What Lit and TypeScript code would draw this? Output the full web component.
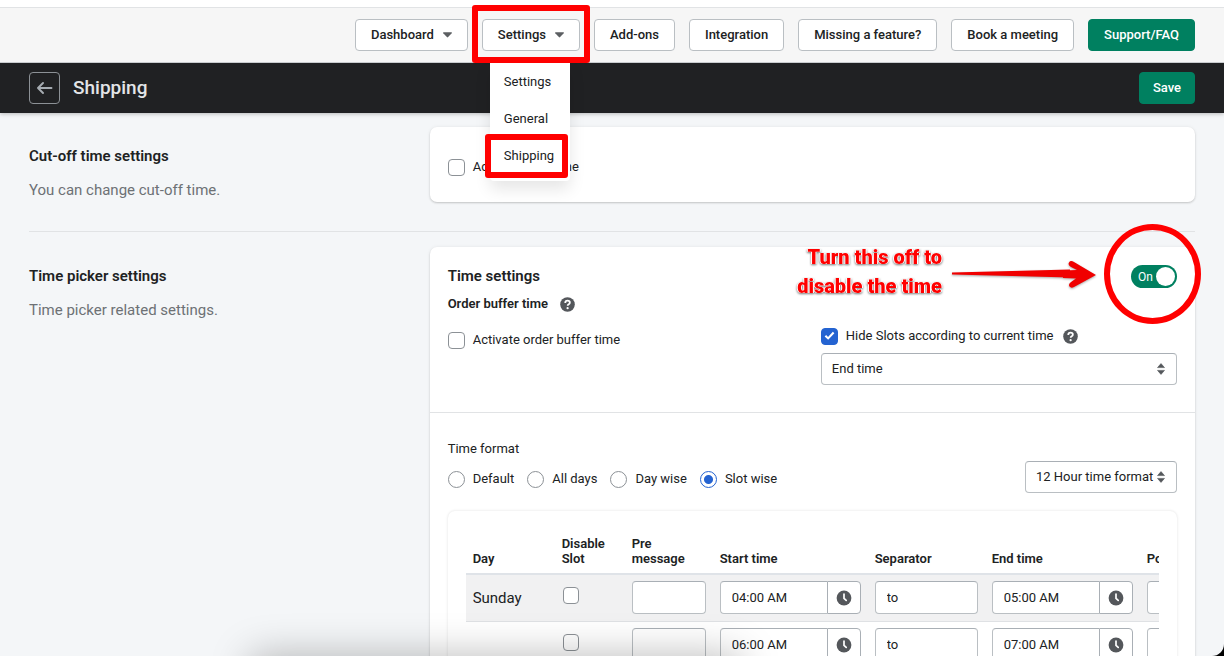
import { LitElement, html, css, svg } from "lit";
import { customElement, property } from "lit/decorators.js";

const caret = svg`<svg class="caret" viewBox="0 0 10 6" width="9" height="6" aria-hidden="true"><path d="M.6 0h8.800q.9.200.300 1L5.700 5.300q-.7.700-1.400 0L.300 1Q-.2.200.6 0z" fill="currentColor"/></svg>`;

const help = svg`<svg class="help" viewBox="0 0 16 16" width="15" height="15" aria-hidden="true"><circle cx="8" cy="8" r="7.800" fill="#54575b"/><path d="M5.600 6.300c0-1.500 1-2.400 2.500-2.400s2.400.9 2.400 2.100c0 1.900-2.300 1.700-2.300 3.300" fill="none" stroke="#fff" stroke-width="1.900"/><circle cx="8.100" cy="11.900" r="1.200" fill="#fff"/></svg>`;

const clock = svg`<svg viewBox="0 0 16 16" width="16" height="16" aria-hidden="true"><circle cx="8" cy="8" r="7.400" fill="#54575b"/><path d="M8 4v4.400l2.200 2" fill="none" stroke="#fff" stroke-width="1.700" stroke-linecap="round"/></svg>`;

const updown = svg`<svg class="updown" viewBox="0 0 8 12" width="8" height="12" aria-hidden="true"><path d="M4 .6 7.500 4.600H.5zM4 11.400.5 7.400h7z" fill="#54575b" stroke="#54575b" stroke-width=".6" stroke-linejoin="round"/></svg>`;

const shared = css`
  * {
    box-sizing: border-box;
  }
  button,
  input,
  select {
    font: inherit;
    color: inherit;
    margin: 0;
  }
  .field {
    width: 100%;
    min-width: 0;
    background: #fff;
    border: 1px solid #babfc3;
    border-top-color: #a9afb5;
    border-radius: 4px;
    padding: 0 11px;
    height: 33px;
  }
  .check {
    appearance: none;
    flex: none;
    width: 17px;
    height: 17px;
    border: 1px solid #8c9196;
    border-radius: 4px;
    background: #fff center / 11px no-repeat;
  }
  .check:checked {
    border-color: #2463d1;
    background-color: #2463d1;
    background-image: url("data:image/svg+xml,%3Csvg xmlns='http://www.w3.org/2000/svg' viewBox='0 0 12 10'%3E%3Cpath d='M1.500 5.300 4.500 8.200 10.500 1.600' fill='none' stroke='white' stroke-width='2.300'/%3E%3C/svg%3E");
  }
`;

interface Slot {
  day: string;
  start: string;
  end: string;
}

@customElement("slot-table")
export class SlotTable extends LitElement {
  @property({ attribute: false }) slots: Slot[] = [];

  static styles = [
    shared,
    css`
      :host {
        display: block;
        overflow: hidden;
      }
      table {
        table-layout: fixed;
        width: 793px;
        border-collapse: separate;
        border-spacing: 0;
      }
      .c-day { width: 89px; }
      .c-off { width: 70px; }
      .c-msg { width: 88px; }
      .c-time { width: 155px; }
      .c-sep { width: 117px; }
      .c-post { width: 119px; }
      th {
        padding: 7px;
        text-align: left;
        vertical-align: bottom;
        font-weight: 600;
        line-height: 15px;
        border-bottom: 2px solid #dfe3e8;
      }
      td {
        padding: 6px 7px 7px;
        border-bottom: 1px solid #dfe1e4;
      }
      tbody tr:nth-child(odd) td {
        background: #f1f1f2;
      }
      .day {
        font-size: 15px;
      }
      .off {
        vertical-align: top;
      }
      .off .check {
        display: block;
        margin-top: 6px;
        margin-left: 1px;
        width: 16px;
      }
      .time {
        display: flex;
      }
      .time .field {
        flex: 1;
        border-radius: 4px 0 0 4px;
        border-right: 0;
      }
      .pick {
        flex: none;
        display: grid;
        place-items: center;
        width: 34px;
        height: 33px;
        padding: 0;
        background: #fff;
        border: 1px solid #a9afb5;
        border-radius: 0 4px 4px 0;
      }
    `,
  ];

  private time(label: string, value: string) {
    return html`<div class="time">
      <input class="field" aria-label=${label} .value=${value} />
      <button class="pick" aria-label="Pick ${label}">${clock}</button>
    </div>`;
  }

  render() {
    return html`<table>
      <colgroup>
        <col class="c-day" /><col class="c-off" /><col class="c-msg" /><col class="c-time" />
        <col class="c-sep" /><col class="c-time" /><col class="c-post" />
      </colgroup>
      <thead>
        <tr>
          <th>Day</th><th>Disable Slot</th><th>Pre message</th><th>Start time</th>
          <th>Separator</th><th>End time</th><th>Post message</th>
        </tr>
      </thead>
      <tbody>
        ${this.slots.map(
          (s) => html`<tr>
            <td class="day">${s.day}</td>
            <td class="off"><input class="check" type="checkbox" aria-label="Disable slot" /></td>
            <td><input class="field" aria-label="Pre message" /></td>
            <td>${this.time("Start time", s.start)}</td>
            <td><input class="field" aria-label="Separator" .value=${"to"} /></td>
            <td>${this.time("End time", s.end)}</td>
            <td><input class="field" aria-label="Post message" /></td>
          </tr>`
        )}
      </tbody>
    </table>`;
  }
}

@customElement("app-root")
export class AppRoot extends LitElement {
  private slots: Slot[] = [
    { day: "Sunday", start: "04:00 AM", end: "05:00 AM" },
    { day: "", start: "06:00 AM", end: "07:00 AM" },
    { day: "", start: "08:00 AM", end: "09:00 AM" },
  ];

  static styles = [
    shared,
    css`
      :host {
        display: block;
        background: #000;
        color: #202223;
        font: 13px/20px Roboto, Inter, "Liberation Sans", sans-serif;
      }
      .app {
        position: relative;
        display: flex;
        flex-direction: column;
        height: 100vh;
        overflow: hidden;
        background: #f4f6f8;
        border-bottom-right-radius: 12px;
      }
      .strip {
        flex: none;
        height: 8px;
        background: #fff;
        border-bottom: 1px solid #e1e3e5;
      }
      .nav {
        position: relative;
        z-index: 3;
        flex: none;
        display: flex;
        justify-content: flex-end;
        gap: 14px;
        padding: 11px 29px;
        background: #f6f6f6;
        border-bottom: 1px solid #c9cccf;
      }
      .btn {
        display: flex;
        align-items: center;
        gap: 9px;
        height: 32px;
        padding: 0 13px;
        font-weight: 500;
        background: #fff;
        border: 1px solid #babfc3;
        border-radius: 4px;
        white-space: nowrap;
      }
      .nav .btn {
        padding: 0 15px;
      }
      .primary {
        color: #fff;
        background: #008060;
        border-color: #008060;
      }
      .caret {
        color: #5c5f62;
      }
      .drop {
        position: relative;
      }
      .mark {
        position: absolute;
        z-index: 2;
        border: 6px solid #f00;
        border-radius: 3px;
        pointer-events: none;
      }
      .mark-btn {
        inset: -14px -10px -12px -10px;
      }
      .menu {
        position: absolute;
        top: 43px;
        left: 8px;
        width: 80px;
        height: 119px;
        background: #fff;
        border-radius: 0 0 4px 4px;
        box-shadow: 0 8px 16px rgba(0, 0, 0, 0.1);
      }
      .menu a {
        position: relative;
        display: block;
        padding: 10px 14px 7px;
        line-height: 20px;
        color: inherit;
        text-decoration: none;
      }
      .mark-item {
        inset: -2px 2px -5px -5px;
      }
      .bar {
        position: relative;
        z-index: 1;
        flex: none;
        display: flex;
        align-items: center;
        gap: 13px;
        height: 50px;
        padding: 0 29px;
        background: #202123;
        box-shadow: 0 1px 4px rgba(0, 0, 0, 0.25);
      }
      .back {
        display: grid;
        place-items: center;
        width: 31px;
        height: 32px;
        padding: 0;
        background: none;
        border: 1px solid #8c9196;
        border-radius: 4px;
      }
      .bar h1 {
        flex: 1;
        margin: 0;
        font-size: 19px;
        font-weight: 500;
        color: #e3e5e7;
      }
      .page {
        flex: 1;
        min-height: 0;
        overflow: hidden;
        padding: 14px 29px 0;
      }
      .section {
        display: grid;
        grid-template-columns: minmax(0, 1fr) minmax(0, 2fr);
        gap: 18px;
      }
      .section + .section {
        margin-top: 29px;
        padding-top: 15px;
        border-top: 1px solid #e1e3e5;
      }
      .about {
        padding-top: 18px;
        font-size: 15px;
      }
      h2 {
        margin: 0;
        font-size: 15px;
        line-height: 22px;
        font-weight: 600;
      }
      .about p {
        margin: 13px 0 0;
        color: #6d7175;
      }
      .card {
        position: relative;
        background: #fff;
        border-radius: 7px;
        box-shadow: 0 1px 2px rgba(23, 24, 24, 0.2), 0 0 4px rgba(23, 24, 24, 0.05);
      }
      .cutoff {
        padding: 30px 18px 25px;
      }
      .opt {
        display: flex;
        align-items: center;
        gap: 8px;
      }
      .opt .help {
        margin-left: 2px;
      }
      .part {
        padding: 18px 18px 27px;
      }
      .part + .part {
        padding-top: 26px;
        border-top: 1px solid #e1e3e5;
      }
      .head {
        display: flex;
        align-items: flex-start;
        justify-content: space-between;
      }
      .switch {
        position: relative;
        display: flex;
        align-items: center;
        justify-content: space-between;
        width: 46px;
        height: 23px;
        padding: 0 2px 0 7px;
        border-radius: 12px;
        background: #008060;
        color: #fff;
        font-size: 12px;
      }
      .switch .knob {
        appearance: none;
        width: 19px;
        height: 19px;
        border-radius: 50%;
        background: #fff;
      }
      .ring {
        inset: -41px -24px -36px -27px;
        border-radius: 50%;
      }
      h3 {
        display: flex;
        align-items: center;
        gap: 12px;
        margin: 6px 0 12px;
        font-size: 13px;
        line-height: 20px;
        font-weight: 600;
      }
      .two {
        display: grid;
        grid-template-columns: 1fr 1fr;
        gap: 17px;
      }
      .two > .left {
        padding-top: 4px;
      }
      .select {
        display: grid;
        align-items: center;
      }
      .select > * {
        grid-area: 1 / 1;
      }
      .select .field {
        appearance: none;
        height: 32px;
        padding: 0 22px 0 10px;
      }
      .updown {
        justify-self: end;
        margin-right: 12px;
        pointer-events: none;
      }
      .wide {
        margin-top: 7px;
      }
      .format {
        display: flex;
        align-items: flex-end;
        justify-content: space-between;
        gap: 20px;
      }
      fieldset {
        margin: 0;
        padding: 0 0 4px;
        border: 0;
      }
      legend {
        padding: 0;
      }
      .radios {
        display: flex;
        gap: 13px;
        margin-top: 10px;
      }
      .radio {
        appearance: none;
        width: 17px;
        height: 17px;
        border: 1px solid #8c9196;
        border-radius: 50%;
        background: #fff;
      }
      .radio:checked {
        border-color: #2463d1;
        background: radial-gradient(circle, #2463d1 4px, #fff 5px);
      }
      .slots {
        margin-top: 18px;
        padding: 18px;
        border-radius: 7px;
        box-shadow: 0 0 3px rgba(23, 24, 24, 0.13);
      }
      .callout {
        position: absolute;
        top: -4px;
        right: 253px;
        margin: 0;
        text-align: right;
        white-space: nowrap;
        color: #f00;
        font: 900 20px/29px Impact, Roboto, "Liberation Sans", sans-serif;
        filter: drop-shadow(1px 0 0 #fff) drop-shadow(-1px 0 0 #fff) drop-shadow(0 1px 1px #777);
      }
      .arrow {
        position: absolute;
        top: 12px;
        right: 98px;
        filter: drop-shadow(0 1px 1px rgba(0, 0, 0, 0.35));
      }
      .haze {
        position: absolute;
        z-index: 2;
        top: 100%;
        left: 21%;
        width: 39%;
        height: 40px;
        box-shadow: 0 6px 40px 6px rgba(0, 0, 0, 0.28);
        pointer-events: none;
      }
    `,
  ];

  private radio(label: string, checked = false) {
    return html`<label class="opt"><input class="radio" type="radio" name="format" ?checked=${checked} />${label}</label>`;
  }

  render() {
    return html`<div class="app">
      <div class="strip"></div>
      <nav class="nav">
        <button class="btn">Dashboard ${caret}</button>
        <div class="drop">
          <button class="btn" aria-expanded="true">Settings ${caret}</button>
          <div class="mark mark-btn"></div>
          <div class="menu">
            <a href="#settings">Settings</a>
            <a href="#general">General</a>
            <a href="#shipping">Shipping<span class="mark mark-item"></span></a>
          </div>
        </div>
        <button class="btn">Add-ons</button>
        <button class="btn">Integration</button>
        <button class="btn">Missing a feature?</button>
        <button class="btn">Book a meeting</button>
        <button class="btn primary">Support/FAQ</button>
      </nav>
      <header class="bar">
        <button class="back" aria-label="Back">
          <svg viewBox="0 0 16 14" width="16" height="14"><path d="M14.500 7H1.500M6 2 1 7l5 5" fill="none" stroke="#a6acb2" stroke-width="1.900" stroke-linecap="round" stroke-linejoin="round" /></svg>
        </button>
        <h1>Shipping</h1>
        <button class="btn primary">Save</button>
      </header>
      <main class="page">
        <section class="section">
          <div class="about">
            <h2>Cut-off time settings</h2>
            <p>You can change cut-off time.</p>
          </div>
          <div class="card cutoff">
            <label class="opt"><input class="check" type="checkbox" />Active cut-off time</label>
          </div>
        </section>
        <section class="section">
          <div class="about">
            <h2>Time picker settings</h2>
            <p>Time picker related settings.</p>
          </div>
          <div class="card">
            <div class="part">
              <div class="head">
                <h2>Time settings</h2>
                <label class="switch">On<input class="knob" type="checkbox" role="switch" checked /><span class="mark ring"></span></label>
              </div>
              <h3>Order buffer time ${help}</h3>
              <div class="two">
                <div class="left">
                  <label class="opt"><input class="check" type="checkbox" />Activate order buffer time</label>
                </div>
                <div>
                  <label class="opt"><input class="check" type="checkbox" checked />Hide Slots according to current time ${help}</label>
                  <div class="select wide">
                    <select class="field" aria-label="Hide slots by"><option>End time</option><option>Start time</option></select>
                    ${updown}
                  </div>
                </div>
              </div>
            </div>
            <div class="part">
              <div class="format">
                <fieldset>
                  <legend>Time format</legend>
                  <div class="radios">
                    ${this.radio("Default")}${this.radio("All days")}${this.radio("Day wise")}${this.radio("Slot wise", true)}
                  </div>
                </fieldset>
                <div class="select">
                  <select class="field" aria-label="Clock format"><option>12 Hour time format</option><option>24 Hour time format</option></select>
                  ${updown}
                </div>
              </div>
              <div class="slots"><slot-table .slots=${this.slots}></slot-table></div>
            </div>
            <p class="callout">Turn this off to<br />disable the time</p>
            <svg class="arrow" viewBox="0 0 146 30" width="146" height="30" aria-hidden="true">
              <path d="M1 13.500 119 10.500V18.500L1 15.500z" fill="#f00000" />
              <path d="M120 8q-3.500-2-2-4.500 1.500-2.500 5-.5L145 16 123 28q-3 1.500-4.500-.5-1.500-2.500 1.500-4.500L125 19.500 112 19V11.500L126 11z" fill="#f00000" />
            </svg>
          </div>
        </section>
      </main>
      <div class="haze"></div>
    </div>`;
  }
}
